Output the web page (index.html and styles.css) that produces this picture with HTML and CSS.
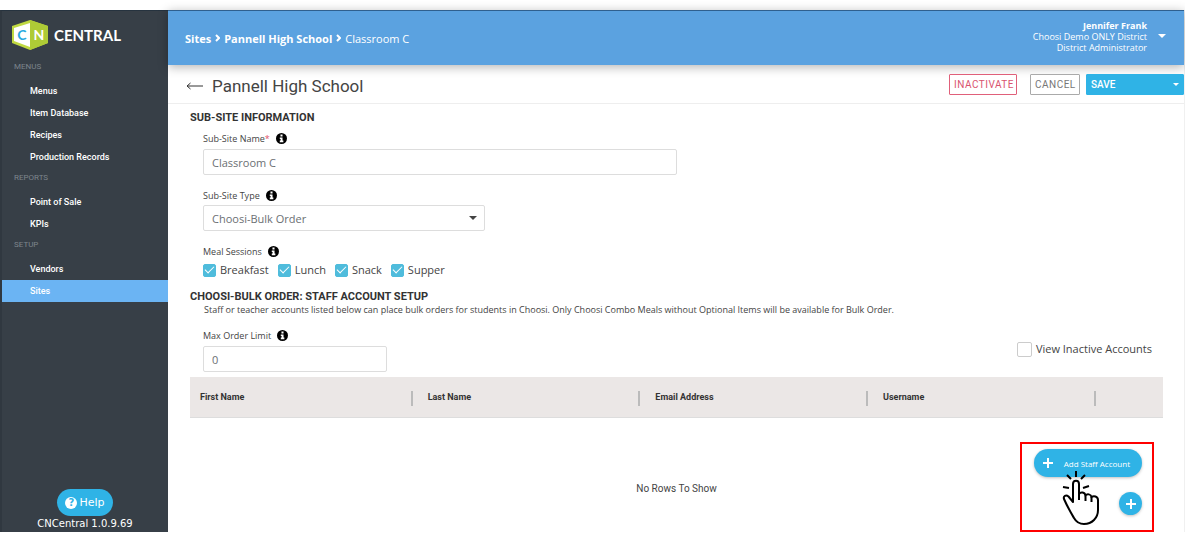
FILE: index.html
```html
<!DOCTYPE html>
<html lang="en">
  <head>
    <meta charset="UTF-8" />
    <meta name="viewport" content="width=device-width, initial-scale=1.0" />
    <title>CN Central - Sites</title>
    <link rel="stylesheet" href="styles.css">
  </head>
  <body>
    <svg class="sprite" aria-hidden="true">
      <symbol id="info" viewBox="0 0 16 16">
        <circle cx="8" cy="8" r="8" fill="#000" />
        <path d="M6.500 2.200h3v2.800H6.500zM5.500 6.400h4v4.600h1.200v2.400H5.500v-2.400h1.200V8.600H5.500z" fill="#fff" />
      </symbol>
    </svg>

    <div class="app">
      <aside class="sidebar">
        <div class="brand">
          <svg class="logo" viewBox="0 0 36 30" aria-hidden="true">
            <path d="M18 0L36 6V23L18 30L0 23V6z" fill="#c0d941" />
            <path d="M18 3V27L2 21V8z" fill="#fff" />
            <path d="M18 0L36 6V23L18 30z" fill="#aecb36" />
            <text x="10" y="20" fill="#29a9e0">C</text>
            <text x="27" y="20" fill="#fff">N</text>
          </svg>
          <span>CENTRAL</span>
        </div>
        <nav>
          <h2>MENUS</h2>
          <a href="#">Menus</a>
          <a href="#">Item Database</a>
          <a href="#">Recipes</a>
          <a href="#">Production Records</a>
          <h2>REPORTS</h2>
          <a href="#">Point of Sale</a>
          <a href="#">KPIs</a>
          <h2>SETUP</h2>
          <a href="#">Vendors</a>
          <a href="#" class="active">Sites</a>
        </nav>
        <div class="sidebar-footer">
          <button type="button" class="help">
            <span class="help-icon" aria-hidden="true">?</span>
            Help
          </button>
          <div class="version">CNCentral 1.0.9.69</div>
        </div>
      </aside>

      <main>
        <header class="topbar">
          <div class="breadcrumb">
            <a href="#">Sites</a>
            <svg viewBox="0 0 5 8" aria-hidden="true"><path d="M1 1l3 3l-3 3" /></svg>
            <a href="#">Pannell High School</a>
            <svg viewBox="0 0 5 8" aria-hidden="true"><path d="M1 1l3 3l-3 3" /></svg>
            <span>Classroom C</span>
          </div>
          <button type="button" class="user">
            <span class="user-text">
              <b>Jennifer Frank</b>
              <span>Choosi Demo ONLY District</span>
              <span>District Administrator</span>
            </span>
            <span class="caret"></span>
          </button>
        </header>

        <div class="titlebar">
          <a href="#" class="back" aria-label="Back">
            <svg viewBox="0 0 17 8" aria-hidden="true"><path d="M17 4H1M4.500 1L1 4l3.500 3" /></svg>
          </a>
          <h1>Pannell High School</h1>
          <button type="button" class="btn inactivate">INACTIVATE</button>
          <button type="button" class="btn cancel">CANCEL</button>
          <button type="button" class="btn save">SAVE <span class="caret"></span></button>
        </div>

        <div class="content">
          <h3>SUB-SITE INFORMATION</h3>
          <div class="field">
            <div class="label-row">
              <label for="siteName">Sub-Site Name<span class="required">*</span></label>
              <svg class="info"><use href="#info" /></svg>
            </div>
            <input type="text" id="siteName" class="name" value="Classroom C" />
          </div>
          <div class="field">
            <div class="label-row">
              <label for="siteType">Sub-Site Type</label>
              <svg class="info"><use href="#info" /></svg>
            </div>
            <div class="select-wrap">
              <select id="siteType">
                <option>Choosi-Bulk Order</option>
              </select>
              <span class="caret"></span>
            </div>
          </div>
          <div class="field sessions">
            <div class="label-row">
              <span>Meal Sessions</span>
              <svg class="info"><use href="#info" /></svg>
            </div>
            <div class="checks">
              <label><input type="checkbox" checked /> Breakfast</label>
              <label><input type="checkbox" checked /> Lunch</label>
              <label><input type="checkbox" checked /> Snack</label>
              <label><input type="checkbox" checked /> Supper</label>
            </div>
          </div>

          <h3>CHOOSI-BULK ORDER: STAFF ACCOUNT SETUP</h3>
          <p class="note">Staff or teacher accounts listed below can place bulk orders for students in Choosi. Only Choosi Combo Meals without Optional Items will be available for Bulk Order.</p>
          <div class="limit-row">
            <div class="field limit">
              <div class="label-row">
                <label for="maxOrder">Max Order Limit</label>
                <svg class="info"><use href="#info" /></svg>
              </div>
              <input type="text" id="maxOrder" value="0" />
            </div>
            <label class="inactive"><input type="checkbox" /> View Inactive Accounts</label>
          </div>

          <table>
            <thead>
              <tr>
                <th><div>First Name</div></th>
                <th><div>Last Name</div></th>
                <th><div>Email Address</div></th>
                <th><div>Username</div></th>
                <td></td>
              </tr>
            </thead>
            <tbody>
              <tr>
                <td colspan="5">No Rows To Show</td>
              </tr>
            </tbody>
          </table>
        </div>

        <div class="actions">
          <button type="button" class="add">
            <svg viewBox="0 0 10 10" aria-hidden="true"><path d="M5 0V10M0 5H10" /></svg>
            Add Staff Account
          </button>
          <button type="button" class="fab" aria-label="Add">
            <svg viewBox="0 0 10 10" aria-hidden="true"><path d="M5 0V10M0 5H10" /></svg>
          </button>
          <svg class="hand" viewBox="0 0 40 54" aria-hidden="true">
            <path d="M12 31V13c0-4.500 6-4.500 6 0V23c1.500-2.500 6-2 6.500 1.500c1.500-2 5.500-1.500 6 1.500c2-1.500 6.500-1 6.500 3V39c0 8-6 14-14 14c-5 0-8-2.500-10-6C9.500 41 6.500 36 3 28c-1-3 2-4.500 4.500-2.500z" fill="#fff" />
            <path d="M18 22V29M24.500 24.500V30M30.500 26V31" />
            <path d="M15 0V6M6 4L10 8M24 4L20 8M2 16L8 17M28 15L22 17" />
          </svg>
        </div>
      </main>
    </div>
  </body>
</html>
```

FILE: styles.css
```css
* {
  box-sizing: border-box;
}
body {
  margin: 0;
  padding: 10px 0 4px;
  height: 100vh;
  background: #fff;
  color: #444;
  font-family: "Open Sans", sans-serif;
  font-size: 9px;
}
.sprite {
  position: absolute;
  width: 0;
  height: 0;
}
a {
  color: inherit;
  text-decoration: none;
}
button,
input,
select {
  font-family: inherit;
  margin: 0;
}
button {
  cursor: pointer;
}
.app {
  display: flex;
  height: 100%;
}

/* sidebar */
.sidebar {
  display: flex;
  flex-direction: column;
  flex: 0 0 168px;
  background: #373f47;
  border-top: 1px solid #26333f;
  border-left: 2px solid #303840;
  color: #fff;
  font-family: Roboto, sans-serif;
}
.brand {
  display: flex;
  align-items: center;
  gap: 6px;
  height: 46px;
  padding: 2px 0 0 10px;
  font-family: Lato, sans-serif;
  font-size: 15px;
  font-weight: 700;
}
.logo {
  width: 36px;
  height: 30px;
  font-size: 14px;
  text-anchor: middle;
}
.sidebar nav {
  display: flex;
  flex-direction: column;
}
.sidebar h2 {
  height: 23px;
  margin: 0;
  padding-left: 12px;
  color: #7d858c;
  font-size: 8px;
  font-weight: 400;
  line-height: 20px;
}
.sidebar nav a {
  padding-left: 28px;
  font-size: 9px;
  font-weight: 500;
  line-height: 22px;
}
.sidebar nav a.active {
  background: #6bb4f3;
}
.sidebar-footer {
  display: flex;
  flex-direction: column;
  align-items: center;
  margin-top: auto;
  font-family: "DejaVu Sans", sans-serif;
}
.help {
  display: flex;
  align-items: center;
  gap: 2px;
  height: 27px;
  padding: 0 8px;
  background: #2fb3e6;
  border: none;
  border-radius: 14px;
  color: #fff;
  font-size: 11px;
}
.help-icon {
  width: 12px;
  height: 12px;
  background: #fff;
  border-radius: 50%;
  color: #2fb3e6;
  font-size: 10px;
  font-weight: 700;
  line-height: 12px;
}
.version {
  font-size: 10px;
  line-height: 16px;
}

/* header */
main {
  position: relative;
  flex: 1;
  min-width: 0;
  border-right: 1px solid #f0f0f0;
}
.topbar {
  display: flex;
  justify-content: space-between;
  align-items: center;
  height: 55px;
  padding: 0 18px 0 17px;
  background: #5ba2e0;
  border-top: 1px solid #2f608f;
  box-shadow: 0 2px 10px rgba(0, 0, 0, 0.3);
  color: #fff;
}
.breadcrumb {
  display: flex;
  align-items: center;
  gap: 4px;
  font-size: 11px;
}
.breadcrumb a {
  font-weight: 700;
}
.breadcrumb svg {
  width: 5px;
  height: 8px;
  fill: none;
  stroke: #fff;
  stroke-width: 2;
}
.user {
  display: flex;
  align-items: center;
  gap: 11px;
  padding: 0 0 4px;
  background: none;
  border: none;
  color: #fff;
  font-size: 9px;
  line-height: 11px;
  text-align: right;
}
.user-text {
  display: flex;
  flex-direction: column;
}
.caret {
  width: 0;
  height: 0;
  border: 4px solid transparent;
  border-top-color: currentColor;
  border-bottom: none;
}
.titlebar {
  display: flex;
  align-items: center;
  height: 39px;
  padding-left: 18px;
  border-bottom: 1px solid #eee;
}
.back {
  display: flex;
  padding-top: 4px;
}
.back svg {
  width: 17px;
  height: 8px;
  fill: none;
  stroke: #333;
}
.titlebar h1 {
  margin: 0 auto 0 9px;
  font-family: Roboto, sans-serif;
  font-size: 17px;
  font-weight: 400;
  padding-top: 4px;
}
.btn {
  height: 21px;
  padding: 0 4px;
  background: #fff;
  border: 1px solid;
  border-radius: 1px;
  font-family: Roboto, sans-serif;
  font-size: 10px;
  letter-spacing: 0.5px;
}
.inactivate {
  width: 68px;
  margin-right: 13px;
  border-color: #e0607a;
  color: #d9536f;
}
.cancel {
  width: 50px;
  margin-right: 6px;
  border-color: #aaa;
  color: #777;
}
.save {
  display: flex;
  justify-content: space-between;
  align-items: center;
  width: 98px;
  background: #2fb3e6;
  border-color: #2fb3e6;
  color: #fff;
  font-weight: 500;
  letter-spacing: 0;
}
.save .caret {
  border-width: 3px;
  border-bottom: none;
}

/* form */
.content {
  padding: 6px 21px 0 22px;
}
h3 {
  margin: 0;
  color: #333;
  font-family: Roboto, sans-serif;
  font-size: 11px;
  font-weight: 700;
  line-height: 16px;
}
.field {
  padding-left: 13px;
  margin-bottom: 12px;
}
.field.sessions {
  margin-bottom: 10px;
}
.label-row {
  display: flex;
  align-items: center;
  gap: 6px;
  height: 18px;
  padding-bottom: 1px;
}
.field:first-of-type .label-row {
  height: 23px;
  padding-top: 3px;
}
.field.limit .label-row {
  height: 20px;
  padding: 0 0 2px;
}
.required {
  color: #e0506a;
}
.info {
  width: 11px;
  height: 11px;
}
input[type="text"],
select {
  display: block;
  width: 100%;
  height: 26px;
  padding: 0 8px;
  background: #fff;
  border: 1px solid #ddd;
  border-radius: 2px;
  color: #6b6f73;
  font-size: 11px;
}
input.name {
  width: 474px;
  max-width: 100%;
}
.select-wrap {
  display: grid;
  align-items: center;
  width: 282px;
  max-width: 100%;
}
.select-wrap > * {
  grid-area: 1 / 1;
}
select {
  appearance: none;
}
.select-wrap .caret {
  justify-self: end;
  margin-right: 8px;
  pointer-events: none;
}
.checks {
  display: flex;
  gap: 9px;
}
.checks label,
.inactive {
  display: flex;
  align-items: center;
  gap: 4px;
  font-size: 11px;
  line-height: 18px;
}
input[type="checkbox"] {
  appearance: none;
  width: 13px;
  height: 13px;
  background: #fff;
  border: 1px solid #ccc;
  border-radius: 2px;
}
input[type="checkbox"]:checked {
  display: grid;
  place-items: center;
  background: #4fbcdc;
  border-color: #4fbcdc;
}
input[type="checkbox"]:checked::after {
  content: "";
  width: 8px;
  height: 4px;
  margin-bottom: 3px;
  border: solid #fff;
  border-width: 0 0 1px 1px;
  transform: rotate(-45deg);
}
.note {
  margin: 0;
  padding-left: 14px;
  line-height: 10px;
}
.limit-row {
  display: flex;
  justify-content: space-between;
  align-items: center;
  padding: 11px 11px 5px 0;
}
.field.limit {
  width: 197px;
  margin: 0;
}
.inactive input[type="checkbox"] {
  width: 15px;
  height: 15px;
}

/* accounts grid */
table {
  width: 100%;
  border-collapse: collapse;
  table-layout: fixed;
  font-family: Roboto, sans-serif;
}
thead tr {
  height: 40px;
  background: #ebe7e6;
  border-bottom: 1px solid #ddd;
}
th {
  width: 23.4%;
  padding: 0 5px 0 10px;
  color: #333;
  font-weight: 700;
  text-align: left;
}
th div {
  display: flex;
  justify-content: space-between;
  align-items: center;
}
th div::after {
  content: "";
  width: 2px;
  height: 15px;
  margin-top: 4px;
  background: #bbb;
}
tbody td {
  height: 110px;
  padding: 32px 0 0;
  font-size: 10px;
  text-align: center;
}

/* floating buttons */
.actions {
  position: absolute;
  right: 30px;
  bottom: 0;
  display: flex;
  flex-direction: column;
  align-items: flex-end;
  gap: 15px;
  width: 134px;
  height: 90px;
  padding: 5px 10px;
  border: 2px solid #f00;
}
.add,
.fab {
  display: flex;
  align-items: center;
  background: #2fb3e6;
  border: none;
  color: #fff;
  box-shadow: 0 1px 3px rgba(0, 0, 0, 0.25);
}
.add {
  gap: 11px;
  height: 28px;
  padding: 0 12px 0 9px;
  border-radius: 14px;
  font-size: 8px;
}
.fab {
  justify-content: center;
  width: 23px;
  height: 23px;
  padding: 0;
  border-radius: 50%;
}
.add svg,
.fab svg {
  width: 10px;
  height: 10px;
  stroke: #fff;
  stroke-width: 2;
}
.hand {
  position: absolute;
  left: 39px;
  top: 27px;
  width: 40px;
  height: 54px;
  fill: none;
  stroke: #000;
  stroke-width: 2;
  stroke-linejoin: round;
}
```
